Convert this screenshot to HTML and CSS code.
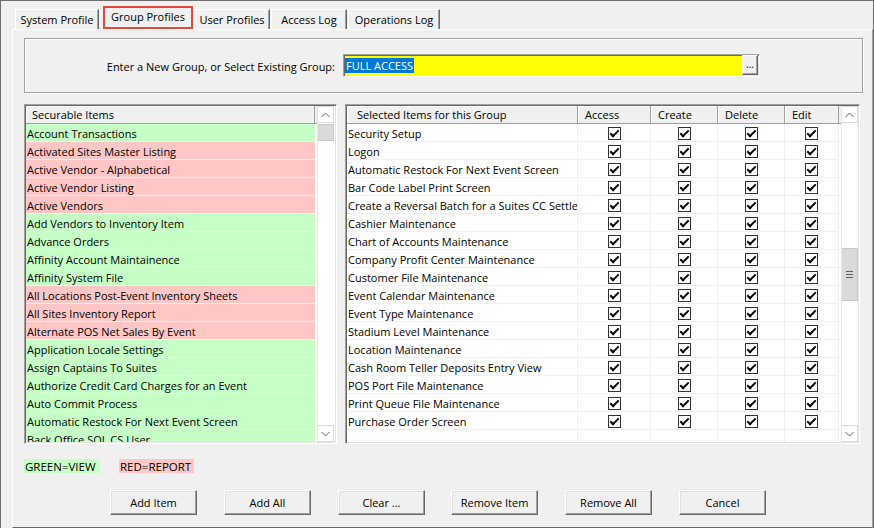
FILE: index.html
```html
<!DOCTYPE html>
<html>
<head>
<meta charset="utf-8">
<title>Group Profiles</title>
<link rel="stylesheet" href="styles.css">
</head>
<body>
<div class="window">
  <div class="tabs">
    <div class="tab t1">System Profile</div>
    <div class="tab active">Group Profiles</div>
    <div class="tab t3">User Profiles</div>
    <div class="tab t4">Access Log</div>
    <div class="tab t5">Operations Log</div>
  </div>
  <div class="panel">
    <div class="groupbox">
      <div class="group-label">Enter a New Group, or Select Existing Group:</div>
      <div class="combo">
        <span class="sel">FULL ACCESS</span>
        <span class="dots">...</span>
      </div>
    </div>

    <div class="lists">
      <div class="list list-left">
        <div class="lv">
          <div class="header">
            <div class="hcell hc-items">Securable Items</div>
          </div>
          <div class="rows">
            <div class="lrow g">Account Transactions</div>
            <div class="lrow r">Activated Sites Master Listing</div>
            <div class="lrow r">Active Vendor - Alphabetical</div>
            <div class="lrow r">Active Vendor Listing</div>
            <div class="lrow r">Active Vendors</div>
            <div class="lrow g">Add Vendors to Inventory Item</div>
            <div class="lrow g">Advance Orders</div>
            <div class="lrow g">Affinity Account Maintainence</div>
            <div class="lrow g">Affinity System File</div>
            <div class="lrow r">All Locations Post-Event Inventory Sheets</div>
            <div class="lrow r">All Sites Inventory Report</div>
            <div class="lrow r">Alternate POS Net Sales By Event</div>
            <div class="lrow g">Application Locale Settings</div>
            <div class="lrow g">Assign Captains To Suites</div>
            <div class="lrow g">Authorize Credit Card Charges for an Event</div>
            <div class="lrow g">Auto Commit Process</div>
            <div class="lrow g">Automatic Restock For Next Event Screen</div>
            <div class="lrow g">Back Office SQL CS User</div>
          </div>
        </div>
        <div class="vscroll">
          <div class="sbtn"><svg width="9" height="6" viewBox="0 0 9 6"><polyline points="0.5,5 4.5,1 8.5,5" fill="none" stroke="#606060" stroke-width="1"/></svg></div>
          <div class="track"><div class="thumb thumb-left"></div></div>
          <div class="sbtn"><svg width="9" height="6" viewBox="0 0 9 6"><polyline points="0.5,1 4.5,5 8.5,1" fill="none" stroke="#606060" stroke-width="1"/></svg></div>
        </div>
      </div>

      <div class="list list-right">
        <div class="lv">
          <div class="header">
            <div class="hcell c-name hc-name">Selected Items for this Group</div>
            <div class="hcell c-acc">Access</div>
            <div class="hcell c-cre">Create</div>
            <div class="hcell c-del">Delete</div>
            <div class="hcell c-edit">Edit</div>
          </div>
          <div class="rows">
            <div class="rrow"><div class="cell c-name">Security Setup</div><div class="cell c-acc"><span class="cb"></span></div><div class="cell c-cre"><span class="cb"></span></div><div class="cell c-del"><span class="cb"></span></div><div class="cell c-edit"><span class="cb"></span></div></div>
            <div class="rrow"><div class="cell c-name">Logon</div><div class="cell c-acc"><span class="cb"></span></div><div class="cell c-cre"><span class="cb"></span></div><div class="cell c-del"><span class="cb"></span></div><div class="cell c-edit"><span class="cb"></span></div></div>
            <div class="rrow"><div class="cell c-name">Automatic Restock For Next Event Screen</div><div class="cell c-acc"><span class="cb"></span></div><div class="cell c-cre"><span class="cb"></span></div><div class="cell c-del"><span class="cb"></span></div><div class="cell c-edit"><span class="cb"></span></div></div>
            <div class="rrow"><div class="cell c-name">Bar Code Label Print Screen</div><div class="cell c-acc"><span class="cb"></span></div><div class="cell c-cre"><span class="cb"></span></div><div class="cell c-del"><span class="cb"></span></div><div class="cell c-edit"><span class="cb"></span></div></div>
            <div class="rrow"><div class="cell c-name">Create a Reversal Batch for a Suites CC Settlement</div><div class="cell c-acc"><span class="cb"></span></div><div class="cell c-cre"><span class="cb"></span></div><div class="cell c-del"><span class="cb"></span></div><div class="cell c-edit"><span class="cb"></span></div></div>
            <div class="rrow"><div class="cell c-name">Cashier Maintenance</div><div class="cell c-acc"><span class="cb"></span></div><div class="cell c-cre"><span class="cb"></span></div><div class="cell c-del"><span class="cb"></span></div><div class="cell c-edit"><span class="cb"></span></div></div>
            <div class="rrow"><div class="cell c-name">Chart of Accounts Maintenance</div><div class="cell c-acc"><span class="cb"></span></div><div class="cell c-cre"><span class="cb"></span></div><div class="cell c-del"><span class="cb"></span></div><div class="cell c-edit"><span class="cb"></span></div></div>
            <div class="rrow"><div class="cell c-name">Company Profit Center Maintenance</div><div class="cell c-acc"><span class="cb"></span></div><div class="cell c-cre"><span class="cb"></span></div><div class="cell c-del"><span class="cb"></span></div><div class="cell c-edit"><span class="cb"></span></div></div>
            <div class="rrow"><div class="cell c-name">Customer File Maintenance</div><div class="cell c-acc"><span class="cb"></span></div><div class="cell c-cre"><span class="cb"></span></div><div class="cell c-del"><span class="cb"></span></div><div class="cell c-edit"><span class="cb"></span></div></div>
            <div class="rrow"><div class="cell c-name">Event Calendar Maintenance</div><div class="cell c-acc"><span class="cb"></span></div><div class="cell c-cre"><span class="cb"></span></div><div class="cell c-del"><span class="cb"></span></div><div class="cell c-edit"><span class="cb"></span></div></div>
            <div class="rrow"><div class="cell c-name">Event Type Maintenance</div><div class="cell c-acc"><span class="cb"></span></div><div class="cell c-cre"><span class="cb"></span></div><div class="cell c-del"><span class="cb"></span></div><div class="cell c-edit"><span class="cb"></span></div></div>
            <div class="rrow"><div class="cell c-name">Stadium Level Maintenance</div><div class="cell c-acc"><span class="cb"></span></div><div class="cell c-cre"><span class="cb"></span></div><div class="cell c-del"><span class="cb"></span></div><div class="cell c-edit"><span class="cb"></span></div></div>
            <div class="rrow"><div class="cell c-name">Location Maintenance</div><div class="cell c-acc"><span class="cb"></span></div><div class="cell c-cre"><span class="cb"></span></div><div class="cell c-del"><span class="cb"></span></div><div class="cell c-edit"><span class="cb"></span></div></div>
            <div class="rrow"><div class="cell c-name">Cash Room Teller Deposits Entry View</div><div class="cell c-acc"><span class="cb"></span></div><div class="cell c-cre"><span class="cb"></span></div><div class="cell c-del"><span class="cb"></span></div><div class="cell c-edit"><span class="cb"></span></div></div>
            <div class="rrow"><div class="cell c-name">POS Port File Maintenance</div><div class="cell c-acc"><span class="cb"></span></div><div class="cell c-cre"><span class="cb"></span></div><div class="cell c-del"><span class="cb"></span></div><div class="cell c-edit"><span class="cb"></span></div></div>
            <div class="rrow"><div class="cell c-name">Print Queue File Maintenance</div><div class="cell c-acc"><span class="cb"></span></div><div class="cell c-cre"><span class="cb"></span></div><div class="cell c-del"><span class="cb"></span></div><div class="cell c-edit"><span class="cb"></span></div></div>
            <div class="rrow"><div class="cell c-name">Purchase Order Screen</div><div class="cell c-acc"><span class="cb"></span></div><div class="cell c-cre"><span class="cb"></span></div><div class="cell c-del"><span class="cb"></span></div><div class="cell c-edit"><span class="cb"></span></div></div>
            <div class="rrow"><div class="cell c-name"></div><div class="cell c-acc"></div><div class="cell c-cre"></div><div class="cell c-del"></div><div class="cell c-edit"></div></div>
          </div>
        </div>
        <div class="vscroll">
          <div class="sbtn"><svg width="9" height="6" viewBox="0 0 9 6"><polyline points="0.5,5 4.5,1 8.5,5" fill="none" stroke="#606060" stroke-width="1"/></svg></div>
          <div class="track">
            <div class="thumb thumb-right">
              <svg width="7" height="7" viewBox="0 0 7 7"><rect x="0" y="0" width="7" height="1" fill="#606060"/><rect x="0" y="3" width="7" height="1" fill="#606060"/><rect x="0" y="6" width="7" height="1" fill="#606060"/></svg>
            </div>
          </div>
          <div class="sbtn"><svg width="9" height="6" viewBox="0 0 9 6"><polyline points="0.5,1 4.5,5 8.5,1" fill="none" stroke="#606060" stroke-width="1"/></svg></div>
        </div>
      </div>
    </div>

    <div class="legend">
      <span class="lg lg-green">GREEN=VIEW</span>
      <span class="lg lg-red">RED=REPORT</span>
    </div>

    <div class="buttons">
      <div class="btn">Add Item</div>
      <div class="btn">Add All</div>
      <div class="btn">Clear ...</div>
      <div class="btn">Remove Item</div>
      <div class="btn">Remove All</div>
      <div class="btn">Cancel</div>
    </div>
  </div>
</div>
</body>
</html>
```

FILE: styles.css
```css
* { box-sizing: border-box; }

body {
  margin: 0;
  background: #f0f0f0;
  font-family: "Open Sans", "Liberation Sans", sans-serif;
  font-size: 11px;
  color: #000;
}

.window {
  width: 874px;
  height: 528px;
  border: 1px solid #6d6d6d;
  border-bottom: none;
  background: #f0f0f0;
  overflow: hidden;
}

/* ---------- tabs ---------- */
.tabs {
  display: flex;
  align-items: flex-end;
  height: 28px;
  padding-left: 14px;
}

.tab {
  height: 20px;
  border-top: 1px solid #fff;
  border-left: 1px solid #fff;
  border-right: 1px solid #696969;
  box-shadow: inset -1px 0 0 #a0a0a0;
  text-align: center;
  line-height: 19px;
  white-space: nowrap;
  margin-left: 1px;
}

.t1 { width: 84px; margin-left: 0; }
.t3 { width: 76px; }
.t4 { width: 76px; }
.t5 { width: 92px; }

.tab.active {
  margin-left: 4px;
  width: 90px;
  height: 23px;
  border: 2px solid #e8453c;
  box-shadow: none;
  line-height: 17px;
}

/* ---------- panel ---------- */
.panel {
  margin-left: 11px;
  width: 861px;
  height: 499px;
  border-top: 1px solid #fff;
  border-left: 1px solid #fff;
  border-right: 1px solid #a0a0a0;
  border-bottom: 1px solid #696969;
}

.groupbox {
  margin: 8px 0 0 11px;
  width: 839px;
  height: 55px;
  border: 1px solid #a0a0a0;
  box-shadow: inset 1px 1px 0 #fff, 1px 1px 0 #fff;
  display: flex;
  align-items: center;
}

.group-label {
  width: 310px;
  text-align: right;
  white-space: nowrap;
  padding-top: 1px;
}

.combo {
  margin-left: 8px;
  width: 417px;
  height: 23px;
  border: 1px solid;
  border-color: #a0a0a0 #fff #fff #a0a0a0;
  box-shadow: inset 1px 1px 0 #696969, inset -1px -1px 0 #e3e3e3;
  background: #ffff00;
  padding: 0 1px 0 1px;
  display: flex;
  align-items: center;
}

.sel {
  background: #0078d7;
  color: #fff;
  height: 15px;
  line-height: 15px;
  padding: 0 1px;
}

.dots {
  margin-left: auto;
  align-self: flex-start;
  width: 16px;
  height: 20px;
  background: #f0f0f0;
  border: 1px solid;
  border-color: #fff #696969 #696969 #fff;
  box-shadow: inset -1px -1px 0 #a0a0a0;
  font-size: 10px;
  line-height: 16px;
  text-align: center;
}

/* ---------- list views ---------- */
.lists {
  margin: 11px 0 0 11px;
  display: flex;
  gap: 8px;
}

.list {
  height: 340px;
  border: 1px solid;
  border-color: #a0a0a0 #fff #fff #a0a0a0;
  box-shadow: inset 1px 1px 0 #696969, inset -1px -1px 0 #e3e3e3;
  padding: 1px;
  display: flex;
  background: #fff;
}

.list-left { width: 313px; }
.list-right { width: 515px; }

.lv {
  flex: 1;
  overflow: hidden;
  background: #fff;
}

.list-left .lv { flex: none; width: 291px; }

.header {
  display: flex;
  height: 18px;
  background: #f0f0f0;
  border-bottom: 1px solid #a0a0a0;
}

.hcell {
  height: 17px;
  line-height: 18px;
  border-right: 1px solid #a0a0a0;
  box-shadow: inset 1px 1px 0 #fff;
  padding-left: 7px;
  white-space: nowrap;
  overflow: hidden;
}

.hc-items { width: 289px; padding-left: 6px; }
.hc-name { padding-left: 10px; }

.c-name { width: 231px; }
.c-acc { width: 73px; }
.c-cre { width: 67px; }
.c-del { width: 67px; }
.c-edit { width: 54px; }

.lrow {
  width: 289px;
  height: 18px;
  line-height: 17px;
  padding: 1px 0 0 1px;
  border-bottom: 1px solid #f4f4f4;
  white-space: nowrap;
  overflow: hidden;
}

.lrow.g { background: #c6ffc6; }
.lrow.r { background: #ffc6c6; }

.rrow {
  display: flex;
  height: 18px;
}

.cell {
  height: 18px;
  line-height: 17px;
  border-right: 1px solid #f0f0f0;
  border-bottom: 1px solid #f0f0f0;
  white-space: nowrap;
  overflow: hidden;
}

.cell.c-name { padding: 1px 0 0 1px; }

.cb {
  display: block;
  position: relative;
  width: 13px;
  height: 13px;
  margin: 3px auto 0;
  border: 1px solid #333;
  background: #fff;
}

.cb::after {
  content: "";
  position: absolute;
  left: 3px;
  top: 0px;
  width: 3px;
  height: 7px;
  border: solid #000;
  border-width: 0 2px 2px 0;
  transform: rotate(45deg);
}

/* ---------- scrollbars ---------- */
.vscroll {
  width: 17px;
  display: flex;
  flex-direction: column;
  background: #fff;
  border-left: 1px solid #e6e6e6;
}

.sbtn {
  height: 17px;
  border: 1px solid #dadada;
  border-left: none;
  background: #fff;
  display: flex;
  align-items: center;
  justify-content: center;
}

.track { flex: 1; }

.thumb {
  background: #dadada;
  border: 1px solid #c8c8c8;
  border-left: none;
}

.thumb-left { margin-top: 1px; height: 17px; }
.thumb-right {
  margin-top: 125px;
  height: 53px;
  display: flex;
  align-items: center;
  justify-content: center;
}

/* ---------- legend ---------- */
.legend {
  margin: 15px 0 0 11px;
  display: flex;
  height: 14px;
}

.lg {
  height: 14px;
  line-height: 15px;
  font-size: 11.5px;
  padding-left: 1px;
  white-space: nowrap;
}

.lg-green { width: 76px; background: #c6ffc6; }
.lg-red { width: 75px; margin-left: 19px; background: #ffc6c6; }

/* ---------- buttons ---------- */
.buttons {
  margin: 17px 0 0 97px;
  display: flex;
  gap: 27px;
}

.btn {
  width: 87px;
  height: 25px;
  border: 1px solid;
  border-color: #fff #696969 #696969 #fff;
  box-shadow: inset -1px -1px 0 #a0a0a0, inset 1px 1px 0 #e3e3e3;
  background: #f0f0f0;
  text-align: center;
  line-height: 23px;
}

.btn:nth-child(4) { margin-left: -1px; }
```
